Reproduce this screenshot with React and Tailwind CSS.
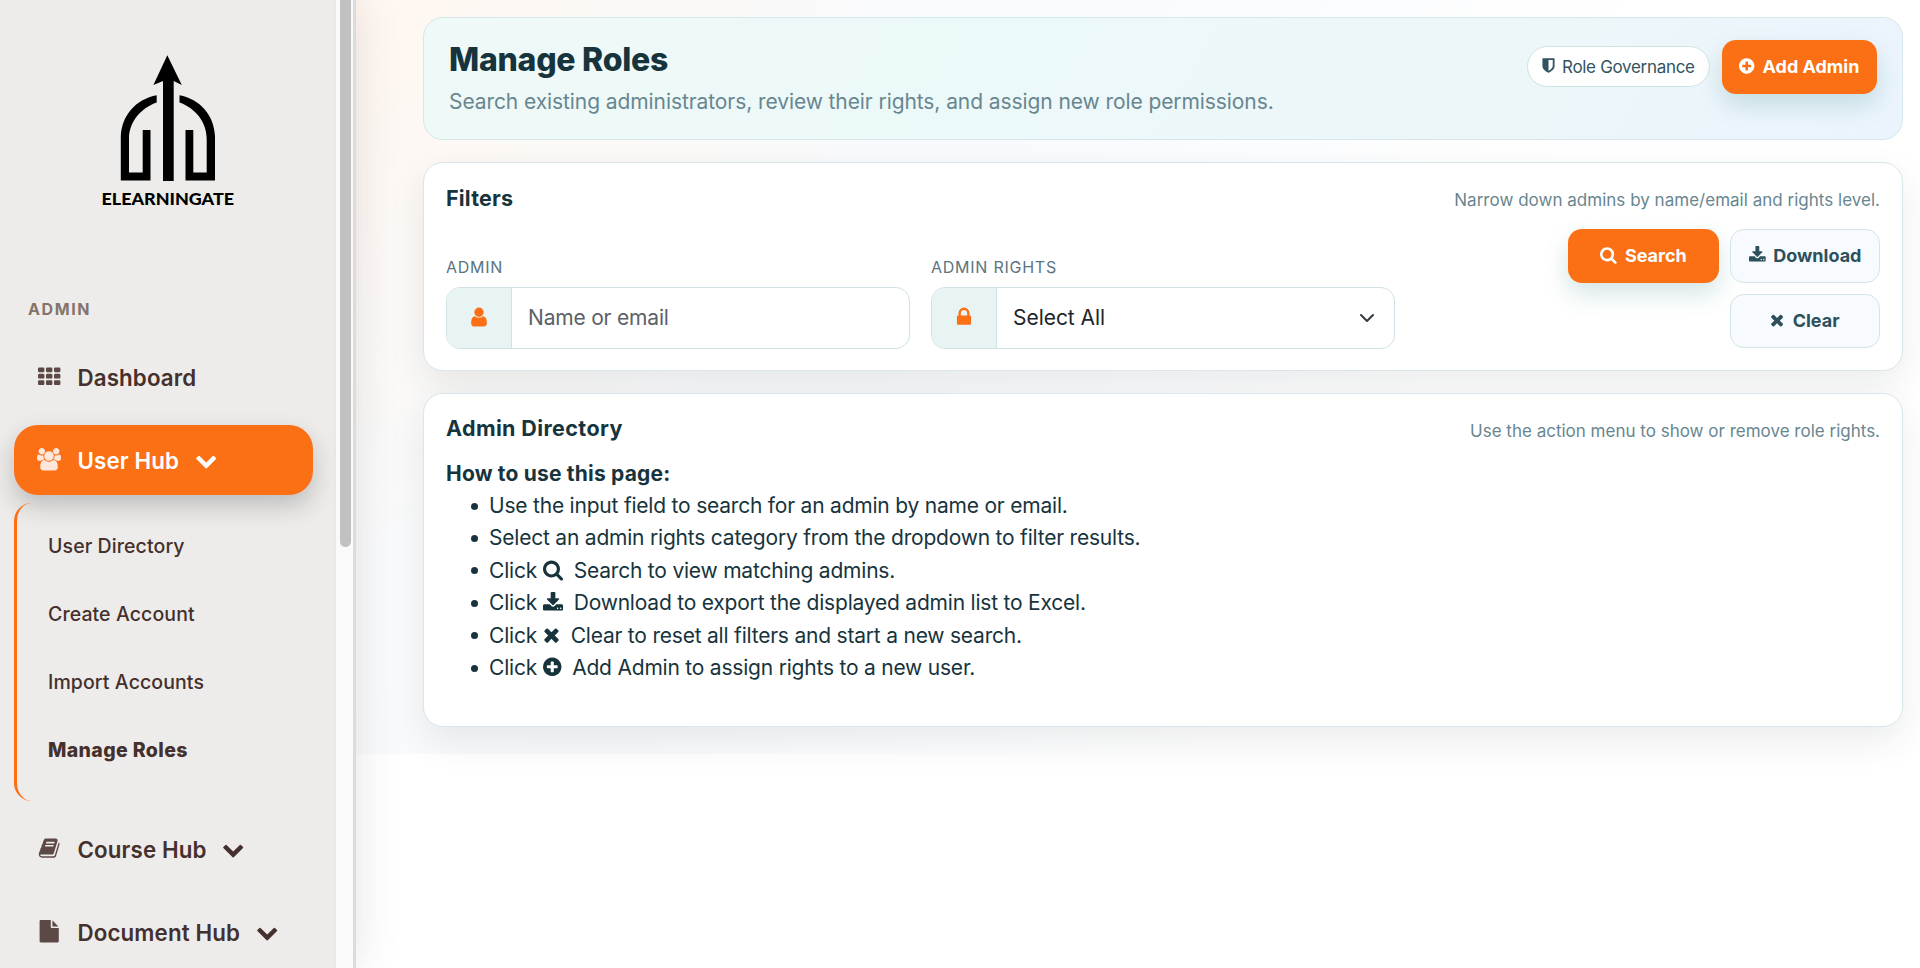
// Font Awesome 4 glyphs, drawn on the 1792 unit grid
const icons = {
    th: 'M0 288q0-40 28-68t68-28h320q40 0 68 28t28 68v192q0 40-28 68t-68 28h-320q-40 0-68-28t-28-68zM640 288q0-40 28-68t68-28h320q40 0 68 28t28 68v192q0 40-28 68t-68 28h-320q-40 0-68-28t-28-68zM1280 288q0-40 28-68t68-28h320q40 0 68 28t28 68v192q0 40-28 68t-68 28h-320q-40 0-68-28t-28-68zM0 800q0-40 28-68t68-28h320q40 0 68 28t28 68v192q0 40-28 68t-68 28h-320q-40 0-68-28t-28-68zM640 800q0-40 28-68t68-28h320q40 0 68 28t28 68v192q0 40-28 68t-68 28h-320q-40 0-68-28t-28-68zM1280 800q0-40 28-68t68-28h320q40 0 68 28t28 68v192q0 40-28 68t-68 28h-320q-40 0-68-28t-28-68zM0 1312q0-40 28-68t68-28h320q40 0 68 28t28 68v192q0 40-28 68t-68 28h-320q-40 0-68-28t-28-68zM640 1312q0-40 28-68t68-28h320q40 0 68 28t28 68v192q0 40-28 68t-68 28h-320q-40 0-68-28t-28-68zM1280 1312q0-40 28-68t68-28h320q40 0 68 28t28 68v192q0 40-28 68t-68 28h-320q-40 0-68-28t-28-68z',
    users: 'M593 896q-162 5-265 128h-134q-82 0-138-40.5t-56-118.5q0-353 124-353 6 0 43.5 21t97.5 42.5 119 21.5q67 0 133-23-5 37-5 66 0 139 81 256zm1071 637q0 120-73 189.5t-194 69.5h-874q-121 0-194-69.5t-73-189.5q0-53 3.5-103.5t14-109 26.5-108.5 43-97.5 62-81 85.5-53.5 111.5-20q10 0 43 21.5t73 48 107 48 135 21.5 135-21.5 107-48 73-48 43-21.5q61 0 111.5 20t85.5 53.5 62 81 43 97.5 26.5 108.5 14 109 3.5 103.5zm-1024-1277q0 106-75 181t-181 75-181-75-75-181 75-181 181-75 181 75 75 181zm704 384q0 159-112.5 271.5t-271.5 112.5-271.5-112.5-112.5-271.5 112.5-271.5 271.5-112.5 271.5 112.5 112.5 271.5zm576 225q0 78-56 118.5t-138 40.5h-134q-103-123-265-128 81-117 81-256 0-29-5-66 66 23 133 23 59 0 119-21.5t97.5-42.5 43.5-21q124 0 124 353zm-128-609q0 106-75 181t-181 75-181-75-75-181 75-181 181-75 181 75 75 181z',
    book: 'M1703 478q40 57 18 129l-275 906q-19 64-76.5 107.5t-122.5 43.5h-923q-77 0-148.5-53.5t-99.5-131.5q-24-67-2-127 0-4 3-27t4-37q1-8-3-21.5t-3-19.5q2-11 8-21t16.5-23.5 16.5-23.5q23-38 45-91.5t30-91.5q3-10 .5-30t-.5-28q3-11 17-28t17-23q21-36 42-92t25-90q1-9-2.5-32t.5-28q4-13 22-30.5t22-22.5q19-26 42.5-84.5t27.5-96.5q1-8-3-25.5t-2-26.5q2-8 9-18t18-23 17-21q8-12 16.5-30.5t15-35 16-36 19.5-32 26.5-23.5 36-11.5 47.5 5.5l-1 3q38-9 51-9h761q74 0 114 56t18 130l-274 906q-36 119-71.5 153.5t-128.5 34.5h-869q-27 0-38 15-11 16-1 43 24 70 144 70h923q29 0 56-15.5t35-41.5l300-987q7-22 5-57 38 15 59 43zm-1064 2q-4 13 2 22.5t20 9.5h608q13 0 25.5-9.5t16.5-22.5l21-64q4-13-2-22.5t-20-9.5h-608q-13 0-25.5 9.5t-16.5 22.5zm-83 256q-4 13 2 22.5t20 9.5h608q13 0 25.5-9.5t16.5-22.5l21-64q4-13-2-22.5t-20-9.5h-608q-13 0-25.5 9.5t-16.5 22.5z',
    file: 'M1152 512v-472q22 14 36 28l408 408q14 14 28 36h-472zm-128 32q0 40 28 68t68 28h544v1056q0 40-28 68t-68 28h-1344q-40 0-68-28t-28-68v-1600q0-40 28-68t68-28h800v544z',
    chevron: 'M1683 808l-742 741q-19 19-45 19t-45-19l-742-741q-19-19-19-45.5t19-45.5l166-165q19-19 45-19t45 19l531 531 531-531q19-19 45-19t45 19l166 165q19 19 19 45.5t-19 45.5z',
    shield: 'M1344 960v-640h-448v1137q119-63 213-137 235-184 235-360zm192-768v768q0 86-33.5 170.5t-83 150-118 127.5-126.5 103-121 77.5-89.5 49.5-42.5 20q-12 6-26 6t-26-6q-16-7-42.5-20t-89.5-49.5-121-77.5-126.5-103-118-127.5-83-150-33.5-170.5v-768q0-26 19-45t45-19h1152q26 0 45 19t19 45z',
    plus: 'M1344 960v-128q0-26-19-45t-45-19h-256v-256q0-26-19-45t-45-19h-128q-26 0-45 19t-19 45v256h-256q-26 0-45 19t-19 45v128q0 26 19 45t45 19h256v256q0 26 19 45t45 19h128q26 0 45-19t19-45v-256h256q26 0 45-19t19-45zm320-64q0 209-103 385.5t-279.5 279.5-385.5 103-385.5-103-279.5-279.5-103-385.5 103-385.5 279.5-279.5 385.5-103 385.5 103 279.5 279.5 103 385.5z',
    user: 'M1536 1399q0 109-62.5 187t-150.5 78h-854q-88 0-150.5-78t-62.5-187q0-85 8.5-160.5t31.5-152 58.5-131 94-89 134.5-34.5q131 128 313 128t313-128q76 0 134.5 34.5t94 89 58.5 131 31.5 152 8.5 160.5zm-256-887q0 159-112.5 271.5t-271.5 112.5-271.5-112.5-112.5-271.5 112.5-271.5 271.5-112.5 271.5 112.5 112.5 271.5z',
    lock: 'M640 768h512v-192q0-106-75-181t-181-75-181 75-75 181v192zm832 96v576q0 40-28 68t-68 28h-960q-40 0-68-28t-28-68v-576q0-40 28-68t68-28h32v-192q0-184 132-316t316-132 316 132 132 316v192h32q40 0 68 28t28 68z',
    search: 'M1216 832q0-185-131.5-316.5t-316.5-131.5-316.5 131.5-131.5 316.5 131.5 316.5 316.5 131.5 316.5-131.5 131.5-316.5zm512 832q0 52-38 90t-90 38q-54 0-90-38l-343-342q-179 124-399 124-143 0-273.5-55.5t-225-150-150-225-55.5-273.5 55.5-273.5 150-225 225-150 273.5-55.5 273.5 55.5 225 150 150 225 55.5 273.5q0 220-124 399l343 343q37 37 37 90z',
    download: 'M1344 1344q0-26-19-45t-45-19-45 19-19 45 19 45 45 19 45-19 19-45zm256 0q0-26-19-45t-45-19-45 19-19 45 19 45 45 19 45-19 19-45zm128-224v320q0 40-28 68t-68 28h-1472q-40 0-68-28t-28-68v-320q0-40 28-68t68-28h465l135 136q58 56 136 56t136-56l136-136h464q40 0 68 28t28 68zm-325-569q17 41-14 70l-448 448q-18 19-45 19t-45-19l-448-448q-31-29-14-70 17-39 59-39h256v-448q0-26 19-45t45-19h256q26 0 45 19t19 45v448h256q42 0 59 39z',
    times: 'M1490 1322q0 40-28 68l-136 136q-28 28-68 28t-68-28l-294-294-294 294q-28 28-68 28t-68-28l-136-136q-28-28-28-68t28-68l294-294-294-294q-28-28-28-68t28-68l136-136q28-28 68-28t68 28l294 294 294-294q28-28 68-28t68 28l136 136q28 28 28 68t-28 68l-294 294 294 294q28 28 28 68z',
};

// narrow glyphs are cropped to their own advance width
const boxes = {
    users: '0 0 1920 1792',
    search: '64 0 1664 1792',
    download: '64 0 1664 1792',
    times: '192 0 1408 1792',
    plus: '128 0 1536 1792',
};

function Icon({ name, className }) {
    return (
        <svg viewBox={boxes[name] || '0 0 1792 1792'} fill="currentColor" className={`shrink-0 overflow-visible ${className}`}>
            <path d={icons[name]} />
        </svg>
    );
}

function Logo() {
    return (
        <svg viewBox="0 0 180 180" className="w-[180px] h-[180px]">
            <path d="M87.3 15.3 101.8 45 93.7 41V141H83V41L73.4 45Z" fill="#000" />
            <path d="M76.7 55.2V62.6C61 68 49 82 49 99V132.6H62.7V90H70.5V140.5H40.8V96C42 75 56 59 76.7 55.2Z" fill="#000" />
            <path d="M99.5 55.2V62.6C115 68 126.7 82 126.7 99V132.6H113.3V90H105.5V140.5H135V96C134 75 120 59 99.5 55.2Z" fill="#000" />
            <text x="21.5" y="164.5" textLength="132.5" lengthAdjust="spacingAndGlyphs" className="font-['Lato'] font-black text-[16px]">ELEARNINGATE</text>
        </svg>
    );
}

function NavItem({ icon, label, active, arrow }) {
    return (
        <a className={`flex items-center h-[69.5px] w-[299px] pl-[23px] rounded-[24px] ${active ? 'bg-[#fb7015] text-white shadow-[0_11px_25px_rgba(20,25,30,0.22)]' : 'text-[#44302c]'}`}>
            <span className="w-[24px] mr-[16.5px] flex justify-center">
                <Icon name={icon} className={`h-[22.4px] -mt-[1px] ${active ? 'w-[24px] text-[#fee6da]' : 'w-[22.4px] text-[#5c4945]'}`} />
            </span>
            <span className="pt-[1px] font-semibold text-[22.3px] tracking-[0.006em]">{label}</span>
            {arrow && <Icon name="chevron" className="w-[22.4px] h-[22.4px] ml-[15.5px]" />}
        </a>
    );
}

function Sidebar() {
    return (
        <aside className="relative z-10 flex w-[356px] shrink-0 bg-[#eeecea] border-r-[3px] border-[#dedcda] shadow-[0_0_42px_rgba(60,50,45,0.13)]">
            <div className="w-[336px] shrink-0 pl-[14px] pt-[40px] border-r-2 border-[#eae8e6]">
                <div className="pl-[66px]">
                    <Logo />
                </div>
                <p className="mt-[77px] ml-[14px] leading-[24px] font-bold text-[16px] tracking-[0.1em] text-[#83756b]">ADMIN</p>
                <nav className="mt-[21px] flex flex-col gap-[13.5px]">
                    <NavItem icon="th" label="Dashboard" />
                    <div>
                        <NavItem icon="users" label="User Hub" active arrow />
                        <div className="mt-[8px] h-[298px] rounded-[18px] border-l-[3px] border-[#fb7015] pl-[31px] pt-[9.5px] text-[#44302c] text-[19.5px] font-medium tracking-[0.005em] leading-[68px]">
                            <p>User Directory</p>
                            <p>Create Account</p>
                            <p>Import Accounts</p>
                            <p className="font-extrabold tracking-[0.019em]">Manage Roles</p>
                        </div>
                    </div>
                    <NavItem icon="book" label="Course Hub" arrow />
                    <NavItem icon="file" label="Document Hub" arrow />
                </nav>
            </div>
            <div className="w-[17px] shrink-0 bg-[#fafafa] pl-[4px]">
                <div className="w-[11px] h-[547px] rounded-b-full bg-[#c1c1c1]" />
            </div>
        </aside>
    );
}

function Button({ icon, primary, className, children }) {
    return (
        <button className={`flex items-center justify-center gap-[8px] h-[54px] rounded-[14px] font-bold text-[18px] ${primary ? 'bg-[#fb7015] text-white shadow-[0_11px_24px_rgba(15,110,105,0.18)]' : 'bg-[#f7fbff] border border-[#d3e4e8] text-[#2d505b]'} ${className}`}>
            <Icon name={icon} className="w-auto h-[18px] -mt-[1px]" />
            {children}
        </button>
    );
}

function Field({ label, icon, children }) {
    return (
        <div className="w-[463.5px]">
            <p className="mb-[7px] leading-[25px] text-[16px] tracking-[0.047em] text-[#5a7480]">{label}</p>
            <div className="flex h-[62px] rounded-[14px] border border-[#cfe2e5] overflow-hidden bg-white text-[21px]">
                <div className="w-[65px] shrink-0 flex items-center justify-center bg-[#e8f4f3] border-r border-[#cfe2e5] text-[#fb7015]">
                    <Icon name={icon} className="w-[22px] h-[22px] -mt-[1px]" />
                </div>
                {children}
            </div>
        </div>
    );
}

const card = 'rounded-[20px] border border-[#d8e7eb] bg-white shadow-[0_14px_36px_rgba(30,40,45,0.09)]';
const step = 'before:inline-block before:w-[7px] before:h-[7px] before:rounded-full before:bg-[#17343d] before:-ml-[18px] before:mr-[11px] before:mb-[2px] before:align-middle';
const stepIcon = 'inline w-auto h-[21.6px] -mt-[4px] mr-[11px]';

export default function App() {
    return (
        <div className="flex h-[968px] overflow-hidden bg-white font-['Inter',sans-serif]">
            <Sidebar />
            <div className="flex-1 min-w-0">
                <main className="h-[754px] pl-[67px] pr-[17px] pt-[17px] bg-[radial-gradient(circle_at_0%_0%,#fff7f1_0%,rgba(255,248,244,0)_32%),linear-gradient(120deg,#fafbfb_0%,#f8fafd_35%,#ffffff_65%)]">
                    <section className="flex justify-between h-[123px] pl-[25px] pr-[25px] rounded-[20px] border border-[#d5e8eb] bg-[linear-gradient(120deg,#eff9f7_0%,#ecf9f9_35%,#edf6f9_75%,#ebf4fd_100%)]">
                        <div className="pt-[22px]">
                            <h1 className="leading-[40px] font-extrabold text-[32px] tracking-[-0.008em] text-[#17343d]">Manage Roles</h1>
                            <p className="mt-[6px] leading-[32px] text-[21px] tracking-[-0.004em] text-[#688690]">
                                Search existing administrators, review their rights, and assign new role permissions.
                            </p>
                        </div>
                        <div className="flex items-start gap-[11.5px] pt-[21.5px]">
                            <span className="mt-[6.5px] flex items-center w-[183px] h-[41px] pl-[12px] gap-[5px] rounded-full border border-[#cde5e1] bg-white text-[17px] tracking-[-0.018em] text-[#315460]">
                                <Icon name="shield" className="w-[17px] h-[17px] -mt-[2px]" />
                                <span className="pt-[2px]">Role Governance</span>
                            </span>
                            <Button icon="plus" primary className="w-[155.5px]">Add Admin</Button>
                        </div>
                    </section>

                    <section className={`mt-[21.5px] h-[209px] px-[22px] pt-[20px] ${card}`}>
                        <div className="flex items-start justify-between">
                            <h2 className="leading-[30px] font-bold text-[21.5px] tracking-[0.009em] text-[#17343d]">Filters</h2>
                            <p className="pt-[4px] text-[17px] leading-[26px] tracking-[0.001em] text-[#688690]">Narrow down admins by name/email and rights level.</p>
                        </div>
                        <div className="mt-[16px] flex items-start">
                            <div className="mt-[26px] flex gap-[21.5px]">
                                <Field label="ADMIN" icon="user">
                                    <input placeholder="Name or email" className="flex-1 px-[16px] outline-none tracking-[-0.009em] placeholder:text-[#5c6166]" />
                                </Field>
                                <Field label="ADMIN RIGHTS" icon="lock">
                                    <div className="flex flex-1 items-center justify-between pl-[16px] pr-[19px] tracking-[-0.002em] text-[#212529]">
                                        Select All
                                        <svg viewBox="0 0 16 16" fill="none" stroke="#343a40" strokeWidth="2" strokeLinecap="round" strokeLinejoin="round" className="w-[16px] h-[16px]">
                                            <path d="m2 5 6 6 6-6" />
                                        </svg>
                                    </div>
                                </Field>
                            </div>
                            <div className="ml-auto flex flex-wrap justify-end gap-[11px] w-[330px]">
                                <Button icon="search" primary className="w-[151px]">Search</Button>
                                <Button icon="download" className="w-[150px]">Download</Button>
                                <Button icon="times" className="w-[150px]">Clear</Button>
                            </div>
                        </div>
                    </section>

                    <section className={`mt-[22px] h-[334px] px-[22px] pt-[19.5px] text-[#17343d] ${card}`}>
                        <div className="flex items-start justify-between">
                            <h2 className="leading-[30px] font-bold text-[21.5px] tracking-[0.018em]">Admin Directory</h2>
                            <p className="pt-[4.5px] text-[17px] leading-[26px] text-[#688690]">Use the action menu to show or remove role rights.</p>
                        </div>
                        <p className="mt-[14px] leading-[32.4px] font-bold text-[21px] tracking-[0.009em]">How to use this page:</p>
                        <ul className="pl-[43px] text-[21px] leading-[32.4px] tracking-[-0.01em]">
                            <li className={step}>Use the input field to search for an admin by name or email.</li>
                            <li className={step}>Select an admin rights category from the dropdown to filter results.</li>
                            <li className={step}>Click <Icon name="search" className={stepIcon} />Search to view matching admins.</li>
                            <li className={step}>Click <Icon name="download" className={stepIcon} />Download to export the displayed admin list to Excel.</li>
                            <li className={step}>Click <Icon name="times" className={stepIcon} />Clear to reset all filters and start a new search.</li>
                            <li className={step}>Click <Icon name="plus" className={stepIcon} />Add Admin to assign rights to a new user.</li>
                        </ul>
                    </section>
                </main>
            </div>
        </div>
    );
}
